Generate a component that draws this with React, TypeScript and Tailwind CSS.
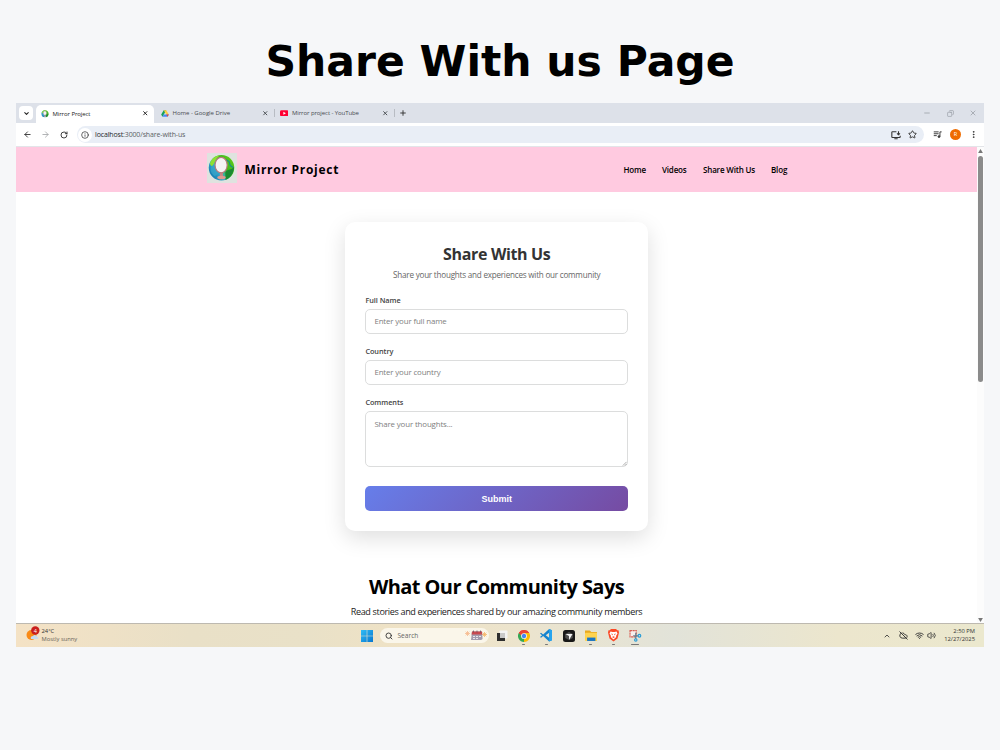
/**
 * Slide page — a title above a captured desktop: browser window showing
 * the "Share With Us" form, with the system taskbar under it.
 */

import type { ReactNode } from 'react'
import { ArrowLeft, ArrowRight, ChevronDown, ChevronUp, CloudOff, Info, Minus, MoreVertical, Plus, RotateCw, Search, Star, Volume2, Wifi, X, Copy } from 'lucide-react'

const NAV_LINKS = [
  { label: 'Home', className: 'w-[38.5px]' },
  { label: 'Videos', className: 'w-[41px]' },
  { label: 'Share With Us', className: 'w-[68px]' },
  { label: 'Blog', className: 'w-[17px]' },
]

function MirrorLogo({ className }: { className: string }) {
  return (
    <svg viewBox="0 0 30 30" className={className}>
      <defs>
        <linearGradient id="globe" x1="0" y1="0.9" x2="1" y2="0.2">
          <stop offset="0" stopColor="#0a66a4" />
          <stop offset="0.4" stopColor="#35b0cf" />
          <stop offset="0.62" stopColor="#3fb81f" />
          <stop offset="1" stopColor="#5fcb18" />
        </linearGradient>
      </defs>
      <circle cx="15" cy="14.3" r="13.2" fill="url(#globe)" />
      <path d="M3 10C5 4 9 2 13 1.6C9 5 8 9 6 12C5 13 4 12 3 10Z" fill="#8ee032" />
      <path d="M4 14C5 11 8 12 9 15L12 20L8 23C5 21 3 18 4 14Z" fill="#3aa5cb" opacity="0.7" />
      <path d="M19 19C22 15 26 17 28 13C28 20 24 25 19 27Z" fill="#1b8a32" />
      <path d="M20 6l3 2 1 4 3 2" stroke="#178f8b" strokeWidth="1.2" fill="none" />
      <path d="M13.6 18h2.6l.6 6h-3.8z" fill="#c98485" />
      <ellipse cx="15" cy="24.4" rx="4.4" ry="1.8" fill="#e09a90" />
      <ellipse cx="14.6" cy="11.5" rx="6.3" ry="8" fill="#f5f3f5" stroke="#b8797b" strokeWidth="1.2" />
    </svg>
  )
}

function DriveIcon() {
  return (
    <svg viewBox="0 0 24 22" className="h-[7px] w-[8px]">
      <path d="M8 1h8l-8 14-4 6-4-7z" fill="#18a05d" />
      <path d="M8 1h8l8 13h-8z" fill="#ffcf43" />
      <path d="M8 14h16l-4 7H4z" fill="#4688f4" />
      <path d="M16 14h8l-4 7z" fill="#ea4335" />
    </svg>
  )
}

function YouTubeIcon() {
  return (
    <svg viewBox="0 0 24 17" className="h-[6.5px] w-[8.5px]">
      <rect width="24" height="17" rx="4" fill="#ff0033" />
      <path d="M9.5 4.5v8l7-4z" fill="#fff" />
    </svg>
  )
}

function InstallIcon() {
  return (
    <svg viewBox="0 0 24 24" className="ml-auto size-[10px]" fill="none" stroke="currentColor" strokeWidth="2.6">
      <path d="M13 4H3.5a1.500 1.500 0 0 0-1.500 1.500v11A1.500 1.500 0 0 0 3.500 18h17a1.500 1.500 0 0 0 1.500-1.500V14M8 21h8" />
      <path d="M18 3v8M14.500 8l3.500 3.500L21.500 8" />
    </svg>
  )
}

function QueueIcon() {
  return (
    <svg viewBox="0 0 24 24" className="ml-auto size-[9px]" fill="none" stroke="currentColor" strokeWidth="2.5">
      <path d="M2 5h13M2 10h13M2 15h8" />
      <path d="M18.5 17V5H23" />
      <circle cx="16" cy="17.5" r="2.5" fill="currentColor" />
    </svg>
  )
}

function TabStrip() {
  return (
    <div className="flex h-5 items-center bg-[#dde1e9] text-[6px] leading-none tracking-[-0.08px] text-[#484c50]">
      <div className="ml-[3px] flex h-[14px] w-[14px] items-center justify-center rounded-[4px] bg-white">
        <ChevronDown className="size-[7px] text-[#222]" strokeWidth={3.5} />
      </div>
      <div className="ml-[3px] flex h-[18px] w-[118px] items-center self-end rounded-t-[5px] bg-white pb-px pl-[4.5px] pr-[5.5px] text-[#222]">
        <MirrorLogo className="size-[8px]" />
        <span className="ml-[4px] flex-1">Mirror Project</span>
        <X className="size-[6.5px]" strokeWidth={3.5} />
      </div>
      <div className="flex h-[18px] w-[119.5px] items-center pl-[6.5px] pr-[5px]">
        <DriveIcon />
        <span className="ml-[4px] flex-1 tracking-[-0.02px]">Home - Google Drive</span>
        <X className="size-[6.5px]" strokeWidth={3.5} />
      </div>
      <div className="h-[8px] w-px bg-[#b8bcc3]" />
      <div className="flex h-[18px] w-[118px] items-center pl-[5px] pr-[4px]">
        <YouTubeIcon />
        <span className="ml-[4px] flex-1 tracking-[-0.08px]">Mirror project - YouTube</span>
        <X className="size-[6.5px]" strokeWidth={3.5} />
      </div>
      <div className="ml-[1px] h-[8px] w-px bg-[#b8bcc3]" />
      <Plus className="ml-[4.5px] size-[8px] text-[#333]" strokeWidth={2.8} />
      <div className="ml-auto mr-[7px] flex w-[54px] items-center justify-between text-[#8f949c]">
        <Minus className="size-[8px]" strokeWidth={2} />
        <Copy className="size-[7px] -scale-x-100" strokeWidth={2} />
        <X className="size-[8px]" strokeWidth={2} />
      </div>
    </div>
  )
}

function Toolbar() {
  return (
    <div className="flex h-[24px] items-center rounded-t-[3px] border-b border-[#e3e5e9] bg-white pl-[7px] pr-[6px] text-[#333]">
      <ArrowLeft className="size-[9px] shrink-0" strokeWidth={2.4} />
      <ArrowRight className="ml-[9px] size-[9px] shrink-0 text-[#a9abae]" strokeWidth={2.4} />
      <RotateCw className="ml-[9.5px] size-[8px] shrink-0" strokeWidth={2.8} />
      <div className="ml-[9px] flex h-[17px] w-[847px] shrink-0 items-center rounded-full bg-[#e9eef6] pl-[1.5px] pr-[7px]">
        <div className="flex size-[14px] items-center justify-center rounded-full bg-white">
          <Info className="size-[8px]" strokeWidth={2.2} />
        </div>
        <span className="ml-[3px] text-[7px] leading-none tracking-[-0.14px] text-[#5b5f65]">
          <span className="text-[#25282b]">localhost</span>:3000/share-with-us
        </span>
        <InstallIcon />
        <Star className="ml-[6.5px] size-[9px]" strokeWidth={2.5} />
      </div>
      <QueueIcon />
      <div className="ml-[8.5px] flex size-[11px] shrink-0 items-center justify-center rounded-full bg-[#ef6c00] text-[5.5px] leading-none text-white">R</div>
      <MoreVertical className="ml-[8px] size-[9px] shrink-0" strokeWidth={2.5} />
    </div>
  )
}

function SiteHeader() {
  return (
    <header className="flex h-[45px] items-center bg-[#ffcae0] pl-[190.5px] text-black">
      <div className="-mt-[3px] flex size-[30px] items-center justify-center bg-[#dfe3df]">
        <MirrorLogo className="size-[29px]" />
      </div>
      <span className="ml-[8px] mt-[1.5px] w-[379px] whitespace-nowrap text-[12px] font-bold leading-none tracking-[0.73px]">Mirror Project</span>
      <nav className="mt-[1px] flex whitespace-nowrap text-[8px] font-semibold leading-none tracking-[-0.17px]">
        {NAV_LINKS.map((link) => (
          <a key={link.label} className={link.className}>{link.label}</a>
        ))}
      </nav>
    </header>
  )
}

function Field({ label, children }: { label: string; children: ReactNode }) {
  return (
    <label className="block">
      <span className="block h-[14px] text-[7.3px] font-semibold leading-[10px] tracking-[-0.05px] text-[#444]">{label}</span>
      {children}
    </label>
  )
}

function ShareForm() {
  const box = 'block w-full rounded-[5px] border border-[#dcdddd] bg-white px-[8px] text-[7.9px] tracking-[-0.14px] placeholder:text-[#808080]'
  return (
    <form className="ml-[329.4px] mt-[30px] h-[309.4px] w-[302.8px] rounded-[10px] bg-white px-5 pt-[22px] shadow-[0_7px_22px_rgba(0,0,0,0.13)]">
      <h2 className="text-center text-[16px] font-bold leading-[21px] tracking-[-0.35px] text-[#333]">Share With Us</h2>
      <p className="mt-[4.4px] whitespace-nowrap text-center text-[8.1px] leading-[12px] tracking-[-0.22px] text-[#666]">
        Share your thoughts and experiences with our community
      </p>
      <div className="mt-[13.6px] flex flex-col gap-[12px]">
        <Field label="Full Name">
          <input className={`${box} h-[25px]`} placeholder="Enter your full name" />
        </Field>
        <Field label="Country">
          <input className={`${box} h-[25px]`} placeholder="Enter your country" />
        </Field>
        <Field label="Comments">
          <div className="relative">
            <textarea className={`${box} h-[56px] resize-none pt-[6px] leading-[12px]`} placeholder="Share your thoughts..." />
            <svg viewBox="0 0 6 6" className="absolute bottom-[1px] right-[1px] size-[5px]">
              <path d="M1 5.5L5.5 1M3.5 5.5L5.5 3.5" stroke="#777" strokeWidth="0.7" />
            </svg>
          </div>
        </Field>
      </div>
      <button type="button" className="mt-[19.4px] block h-[25px] w-full rounded-[5px] bg-linear-[135deg,#667eea,#764ba2] pt-[0.6px] font-['Liberation_Sans'] text-[9px] font-bold leading-none text-white">
        Submit
      </button>
    </form>
  )
}

function ScrollBar() {
  return (
    <div className="flex w-[7px] flex-col items-center bg-[#fcfcfc] pl-[0.5px]">
      <svg viewBox="0 0 6 5" className="mt-[2px] h-[4px] w-[5px]"><path d="M0 5L3 0L6 5Z" fill="#777" /></svg>
      <div className="mt-[3px] h-[226px] w-[5px] rounded-full bg-[#8b8b8b]" />
      <svg viewBox="0 0 6 5" className="mb-[1.5px] mt-auto h-[4px] w-[5px]"><path d="M0 0L3 5L6 0Z" fill="#777" /></svg>
    </div>
  )
}

function StartIcon() {
  return (
    <svg viewBox="0 0 12 12" className="size-[12px]">
      <defs>
        <linearGradient id="win" x1="0" y1="0" x2="1" y2="1">
          <stop stopColor="#2fbcf5" />
          <stop offset="1" stopColor="#0877d0" />
        </linearGradient>
      </defs>
      <path d="M0 0h5.7v5.7H0zM6.3 0H12v5.7H6.3zM0 6.3h5.7V12H0zM6.3 6.3H12V12H6.3z" fill="url(#win)" />
    </svg>
  )
}

function CalendarArt() {
  return (
    <svg viewBox="0 0 22 11" className="h-[11px] w-[22px]">
      <path d="M2.5 1v5M0 3.5h5M.7 1.7l3.6 3.6M4.3 1.7L.7 5.3" stroke="#f6b98c" strokeWidth="0.8" />
      <path d="M19.5 2v5M17 4.5h5M17.7 2.7l3.6 3.6M21.3 2.7l-3.6 3.6" stroke="#f5b566" strokeWidth="0.8" />
      <path d="M7 1.5h10l.6 7.5-1.5 1H6z" fill="#a39bad" />
      <path d="M7 1.5h10l.2 3H6.6z" fill="#c9484f" />
      <path d="M8 6h2v1H8zM11 6h2v1h-2zM14 6h2v1h-2zM8 8h2v1H8zM11 8h2v1h-2z" fill="#e7e3ea" />
      <path d="M8.5 .5v2M12 .5v2M15.5 .5v2" stroke="#63485a" strokeWidth="0.7" />
    </svg>
  )
}

function TaskViewIcon() {
  return (
    <svg viewBox="0 0 12 12" className="size-[12px]">
      <rect x="3.5" y="0.5" width="8" height="8" rx="0.7" fill="#f4f4f4" />
      <path d="M1 3h3v5h5v3H1z" fill="#2e2e2e" />
      <rect x="4" y="3" width="5" height="5" fill="#c9c9c9" />
    </svg>
  )
}

function ChromeIcon() {
  return (
    <svg viewBox="0 0 24 24" className="size-[12px]">
      <path d="M12 12L1.6 6A12 12 0 0 1 22.4 6Z" fill="#ea4335" />
      <path d="M12 12L22.4 6A12 12 0 0 1 12 24Z" fill="#fbbc05" />
      <path d="M12 12L12 24A12 12 0 0 1 1.6 6Z" fill="#34a853" />
      <path d="M12 6h10.4L17 14z" fill="#fbbc05" />
      <path d="M1.6 6L7 15l5-9z" fill="#34a853" />
      <path d="M1.6 6A12 12 0 0 1 22.4 6H12L7 12z" fill="#ea4335" />
      <circle cx="12" cy="12" r="5.7" fill="#fff" />
      <circle cx="12" cy="12" r="4.4" fill="#4285f4" />
    </svg>
  )
}

function CodeIcon() {
  return (
    <svg viewBox="0 0 24 24" className="size-[12.5px]">
      <path d="M17.5 0L24 3v18l-6.5 3L6 13.5 2 17l-2-1.5L4 12 0 8.5 2 7l4 3.5zM17.5 7L11 12l6.5 5z" fill="#1684cf" />
      <path d="M17.5 0L24 3v18l-6.5 3z" fill="#26a4ef" />
    </svg>
  )
}

function CursorIcon() {
  return (
    <svg viewBox="0 0 24 24" className="size-[12px]">
      <rect width="24" height="24" rx="5" fill="#171717" />
      <path d="M4.5 8L12 4l7.5 4v8L12 20l-7.5-4z" fill="#4f4f4f" />
      <path d="M5 8h14l-7 12v-8z" fill="#f1f1f1" />
    </svg>
  )
}

function FolderIcon() {
  return (
    <svg viewBox="0 0 24 22" className="h-[11.5px] w-[12.5px]">
      <path d="M0 1h9l3 3h11v7H0z" fill="#e9a91f" />
      <rect y="5" width="24" height="16" rx="1.5" fill="#ffd34f" />
      <path d="M4 14.5h16V21H4z" fill="#1976c6" />
    </svg>
  )
}

function BraveIcon() {
  return (
    <svg viewBox="0 0 22 25" className="h-[12.5px] w-[11px]">
      <path d="M6 0h10l2.5 2.5H21L22 7l-3 12-8 6-8-6L0 7l1-4.5h2.5z" fill="#fb4a27" />
      <path d="M5 5l4 1h4l4-1 2 4-3 5 .5 2-5.5 5L5.5 16l.5-2-3-5z" fill="#fff" />
      <path d="M6 9l3.5 1L9 13zM16 9l-3.5 1 .5 3zM8 16l3-1.5 3 1.5-3 2z" fill="#fb4a27" />
    </svg>
  )
}

function SnipIcon() {
  return (
    <svg viewBox="0 0 24 24" className="size-[12.5px]" fill="none">
      <path d="M2 3h12v12H2z" fill="#f8efed" stroke="#d85d52" strokeWidth="2.2" strokeDasharray="4 1" />
      <path d="M8 13h10M13 7v12" stroke="#6c7f8c" strokeWidth="2.4" />
      <circle cx="20" cy="13" r="2.6" stroke="#259bd7" strokeWidth="2.2" />
      <circle cx="13" cy="21" r="2.3" stroke="#259bd7" strokeWidth="2.2" />
    </svg>
  )
}

function TaskItem({ children, mark = '' }: { children: ReactNode; mark?: string }) {
  return (
    <div className="flex h-[23px] w-[22.3px] flex-col items-center pt-[5px]">
      <div className="flex h-[13px] items-center">{children}</div>
      {mark && <div className={`mt-[1.5px] h-[1.5px] rounded-full bg-[#777] ${mark}`} />}
    </div>
  )
}

function Taskbar() {
  return (
    <footer className="flex h-[24px] items-center border-t border-[#bdb9b0] bg-linear-[90deg,#f4e2c5_0%,#e9e0c7_18%,#e9e1c8_30%,#efe2c5_40%,#ece4cd_52%,#e2e3d9_68%,#ece6cd_85%,#ebe8ce_100%] text-[5.8px] leading-none text-[#333]">
      <div className="ml-[10px] flex h-full w-[334.5px] items-start pt-[2px]">
        <svg viewBox="0 0 14 15" className="h-[15px] w-[14px]">
          <circle cx="5.5" cy="9" r="5" fill="#f98a16" />
          <path d="M5 13c-1-2 .5-3 2-3 1-2 4-1 4 1 2 0 2 2 0 2z" fill="#c4dcf1" />
          <circle cx="9.3" cy="4.5" r="4.2" fill="#c9201d" />
          <text x="9.3" y="6.5" textAnchor="middle" fontSize="5.5" fill="#fff">4</text>
        </svg>
        <div className="ml-[1.5px] mt-[3px] flex flex-col gap-[2px] whitespace-nowrap">
          <span>24°C</span>
          <span className="text-[#67635a]">Mostly sunny</span>
        </div>
      </div>
      <StartIcon />
      <div className="ml-[7px] flex h-[15px] w-[109px] items-center rounded-full bg-[#faf6ea] pl-[5px] pr-[2px]">
        <Search className="size-[8px]" strokeWidth={2.7} />
        <span className="ml-[5px] mt-[1px] text-[6.6px] text-[#666]">Search</span>
        <span className="ml-auto"><CalendarArt /></span>
      </div>
      <div className="ml-[2px] flex">
        <TaskItem><TaskViewIcon /></TaskItem>
        <TaskItem mark="w-[3px]"><ChromeIcon /></TaskItem>
        <TaskItem mark="w-[3px]"><CodeIcon /></TaskItem>
        <TaskItem><CursorIcon /></TaskItem>
        <TaskItem mark="w-[3px]"><FolderIcon /></TaskItem>
        <TaskItem mark="w-[3px]"><BraveIcon /></TaskItem>
        <TaskItem mark="w-[8px]"><SnipIcon /></TaskItem>
      </div>
      <div className="ml-auto flex items-center pr-[9px]">
        <ChevronUp className="size-[8px]" strokeWidth={2.5} />
        <CloudOff className="ml-[7.5px] size-[9px]" strokeWidth={2.5} />
        <Wifi className="ml-[7.5px] size-[9px]" strokeWidth={2.5} />
        <Volume2 className="ml-[3px] size-[9px]" strokeWidth={2.2} />
        <div className="ml-[8px] flex w-[31px] flex-col items-end gap-[2px] whitespace-nowrap">
          <span>2:50 PM</span>
          <span>12/27/2025</span>
        </div>
      </div>
    </footer>
  )
}

export default function App() {
  return (
    <div className="h-[750px] w-[1000px] overflow-hidden bg-[#f6f7f9] font-['Open_Sans','Noto_Sans',sans-serif]">
      <h1 className="flex h-[103px] items-center justify-center whitespace-nowrap pt-[22px] font-['DejaVu_Sans',sans-serif] text-[42.5px] font-bold leading-none text-black">
        Share With us Page
      </h1>
      <div className="mx-4 flex h-[544px] flex-col bg-white">
        <TabStrip />
        <Toolbar />
        <div className="flex min-h-0 flex-1">
          <main className="min-w-0 flex-1 overflow-hidden">
            <SiteHeader />
            <ShareForm />
            <section className="mt-[42.6px] whitespace-nowrap text-center text-black">
              <h2 className="text-[20px] font-bold leading-[26px] tracking-[-0.57px]">What Our Community Says</h2>
              <p className="mt-[5px] text-[9.1px] leading-[13px] tracking-[-0.37px] text-[#222]">
                Read stories and experiences shared by our amazing community members
              </p>
            </section>
          </main>
          <ScrollBar />
        </div>
        <Taskbar />
      </div>
    </div>
  )
}
